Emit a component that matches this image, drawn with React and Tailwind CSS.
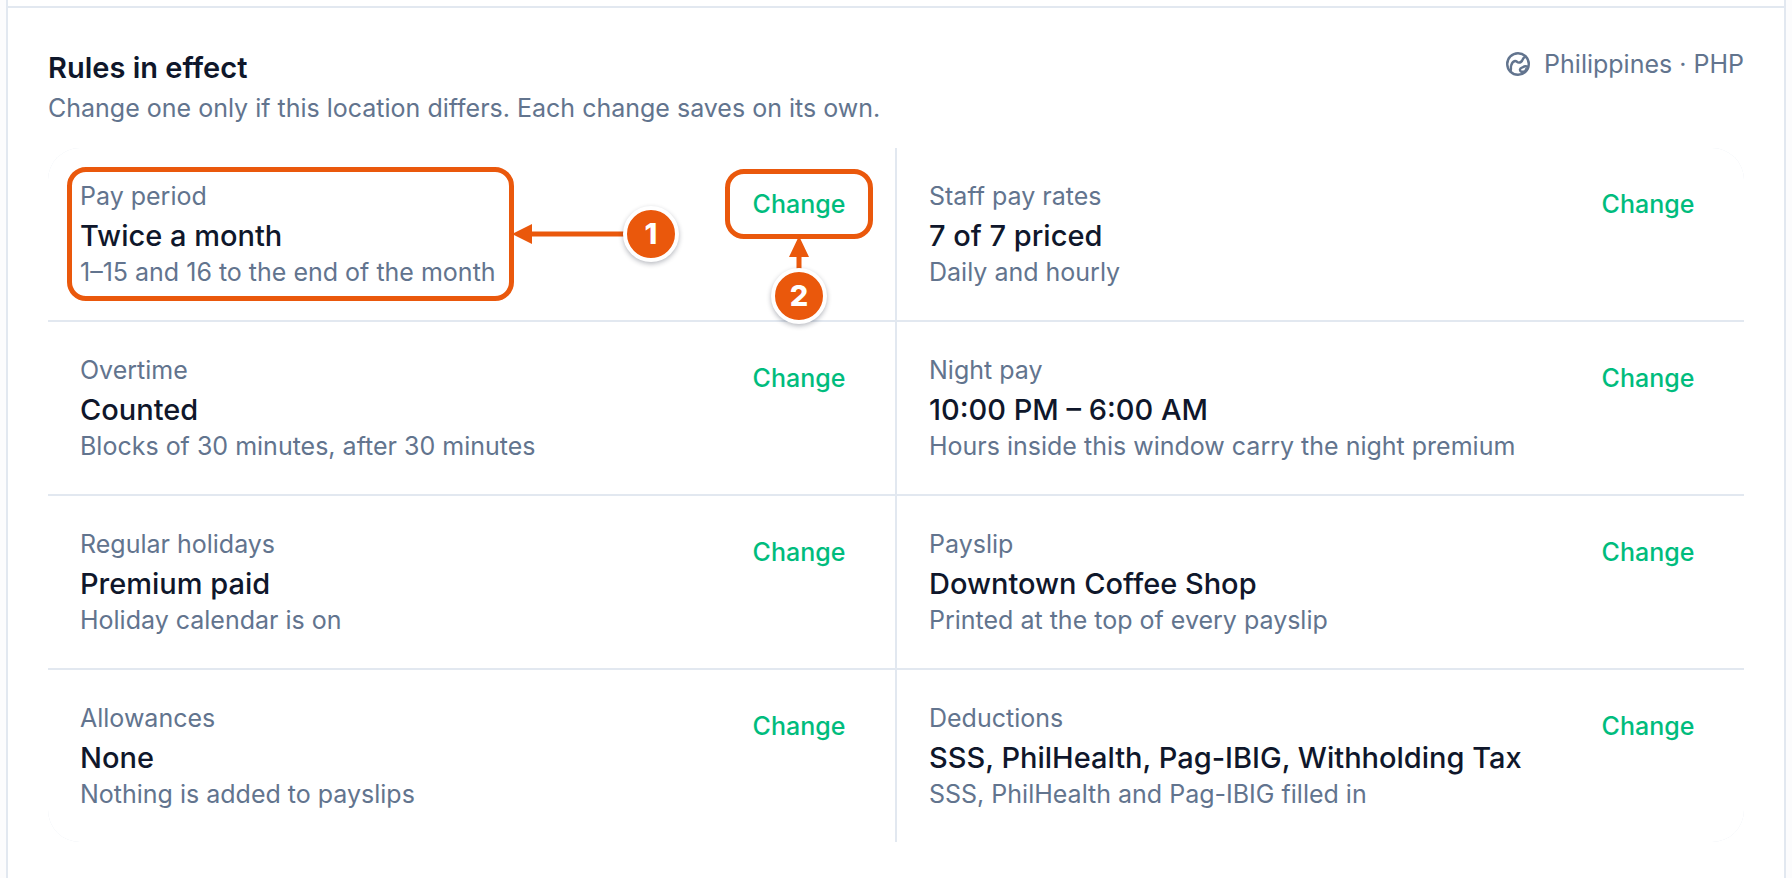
import React from "react";

const rules = [
  { label: "Pay period", value: "Twice a month", detail: "1–15 and 16 to the end of the month", marked: true },
  { label: "Staff pay rates", value: "7 of 7 priced", detail: "Daily and hourly" },
  { label: "Overtime", value: "Counted", detail: "Blocks of 30 minutes, after 30 minutes" },
  { label: "Night pay", value: "10:00 PM – 6:00 AM", detail: "Hours inside this window carry the night premium" },
  { label: "Regular holidays", value: "Premium paid", detail: "Holiday calendar is on" },
  { label: "Payslip", value: "Downtown Coffee Shop", detail: "Printed at the top of every payslip" },
  { label: "Allowances", value: "None", detail: "Nothing is added to payslips" },
  { label: "Deductions", value: "SSS, PhilHealth, Pag-IBIG, Withholding Tax", detail: "SSS, PhilHealth and Pag-IBIG filled in" },
];

const EarthIcon = () => (
  <svg
    className="h-6 w-6"
    viewBox="0 0 24 24"
    fill="none"
    stroke="currentColor"
    strokeWidth="2.4"
    strokeLinecap="round"
    strokeLinejoin="round"
    aria-hidden="true"
  >
    <circle cx="12" cy="12" r="10.8" />
    <path d="M4.4 19.2C5.6 17.6 4.4 15.6 5.2 13.4C6 10.8 7.4 9.2 9 9C10.8 8.8 11 10.6 12.8 10.6C14.8 10.6 15.8 9.6 16.4 8C17 6.2 17.8 5.2 19.6 4.6" />
    <path d="M22 15.2C20.4 14 18.4 14 17 15.2C15.8 15.6 14.2 15.8 14 17.4C13.8 19.2 15.4 20.2 17 19.6C18.8 19.6 20 18.6 20 17.2" />
  </svg>
);

const Marker = ({ number }) => (
  <span className="flex h-14 w-14 shrink-0 items-center justify-center rounded-full border-4 border-white bg-[#ea580c] text-[29px] leading-8 font-extrabold text-white shadow-[0_2px_5px_rgba(15,23,42,0.3)]">
    {number}
  </span>
);

// Orange outline with a numbered arrow coming in from the right
const PeriodCallout = () => (
  <div className="pointer-events-none absolute -inset-[13px] rounded-[19px] border-5 border-[#ea580c]">
    <div className="absolute top-1/2 left-full flex -translate-y-1/2 items-center">
      <svg className="-mr-1 h-5 w-[118px] shrink-0" viewBox="0 0 118 20" fill="#ea580c" aria-hidden="true">
        <path d="M3 10L23 0V7.5H118V12.5H23V20Z" />
      </svg>
      <Marker number={1} />
    </div>
  </div>
);

// Same outline, arrow coming up from below
const ChangeCallout = () => (
  <div className="pointer-events-none absolute -inset-x-[10px] -inset-y-[11px] rounded-[19px] border-5 border-[#ea580c]">
    <div className="absolute top-full left-1/2 flex -translate-x-1/2 flex-col items-center">
      <svg className="-mb-1 h-[38px] w-5 shrink-0" viewBox="0 0 20 38" fill="#ea580c" aria-hidden="true">
        <path d="M10 2L20 23H12.5V38H7.5V23H0Z" />
      </svg>
      <Marker number={2} />
    </div>
  </div>
);

const RuleCell = ({ rule }) => (
  <div className="flex items-start justify-between bg-white p-8">
    <div className={rule.marked ? "relative w-[421px]" : ""}>
      <div className="text-[25px] leading-8 whitespace-nowrap">{rule.label}</div>
      <div className="mt-1 text-[29px] leading-10 font-medium whitespace-nowrap text-slate-900">{rule.value}</div>
      <div className="text-[25px] leading-8 whitespace-nowrap">{rule.detail}</div>
      {rule.marked && <PeriodCallout />}
    </div>
    <div className="relative">
      <button
        type="button"
        aria-label={`Change ${rule.label}`}
        className="flex h-12 w-32 items-center justify-center text-[25px] leading-8 font-medium text-emerald-500"
      >
        Change
      </button>
      {rule.marked && <ChangeCallout />}
    </div>
  </div>
);

const App = () => {
  return (
    <div className="flex min-h-screen flex-col bg-[#fcfcfd] pr-1.5 pl-1.5 font-['Inter',sans-serif] text-slate-500">
      <main className="flex grow flex-col border-x-2 border-slate-200 bg-white pt-1.5">
        <section className="border-t-2 border-slate-200 p-10 pb-9">
          <header className="flex items-start justify-between">
            <div>
              <h2 className="text-[29px] leading-10 font-semibold text-slate-900">Rules in effect</h2>
              <p className="mt-1 text-[25px] leading-8">
                Change one only if this location differs. Each change saves on its own.
              </p>
            </div>
            <div className="flex items-center gap-3.5 text-[25px] leading-8">
              <EarthIcon />
              <span>Philippines · PHP</span>
            </div>
          </header>

          <div className="mt-6 grid grid-cols-2 gap-0.5 overflow-hidden rounded-[32px] bg-slate-200">
            {rules.map((rule) => (
              <RuleCell key={rule.label} rule={rule} />
            ))}
          </div>
        </section>
      </main>
    </div>
  );
};

export default App;
